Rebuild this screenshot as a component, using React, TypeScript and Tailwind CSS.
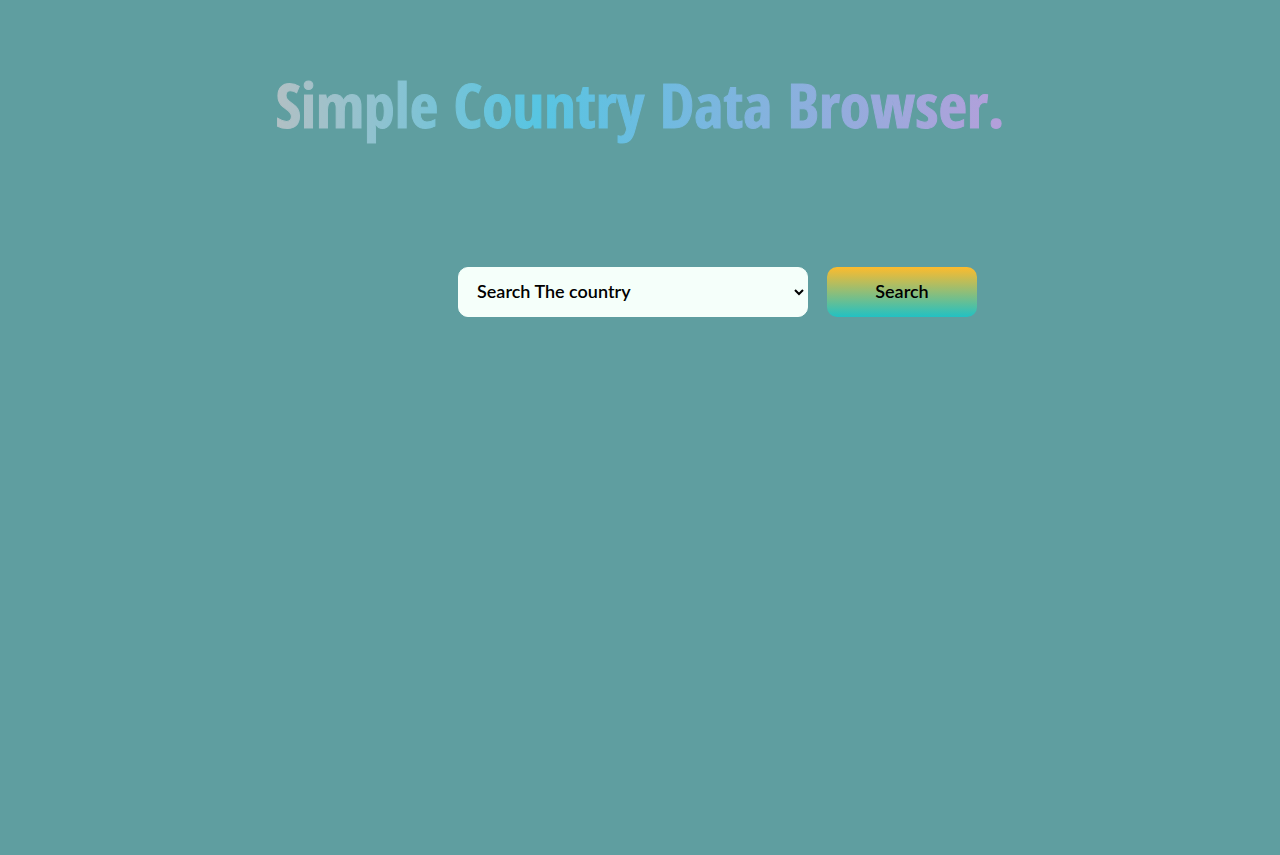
import React from "react";

export default function App() {
  return (
    <main className="flex min-h-screen flex-col items-center bg-[#5f9ea0] px-4">
      <h1 className="mt-14 bg-[linear-gradient(90deg,#b2c0c4_0%,#57c5e2_36%,#b49fda_100%)] bg-clip-text text-center text-[62px] leading-[96px] font-bold text-transparent [-webkit-text-stroke:1px_transparent] font-['Open_Sans_Condensed','Liberation_Sans_Narrow','Open_Sans',sans-serif]">
        Simple Country Data Browser.
      </h1>
      <form className="mt-[115px] ml-[155px] flex gap-[19px]" onSubmit={(e) => e.preventDefault()}>
        <select
          aria-label="Country"
          defaultValue=""
          className="h-[50px] w-[350px] rounded-[10px] border border-[#f5fffa] bg-[#f5fffa] px-[14px] pb-[2px] text-[18px] font-semibold text-black font-['Lato',sans-serif]"
        >
          <option value="">Search The country</option>
        </select>
        <button
          type="submit"
          className="h-[50px] w-[150px] rounded-[10px] bg-[linear-gradient(#fdbb2d,#22c1c3)] pb-[2px] text-[18px] font-semibold text-black font-['Lato',sans-serif]"
        >
          Search
        </button>
      </form>
    </main>
  );
}
